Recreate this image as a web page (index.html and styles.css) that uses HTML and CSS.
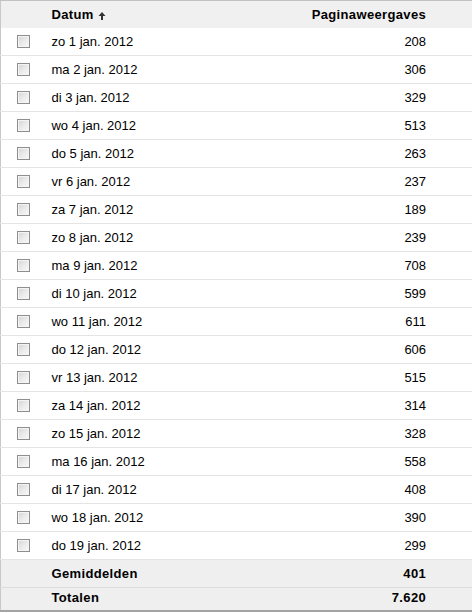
FILE: index.html
```html
<!DOCTYPE html>
<html>
<head>
<meta charset="utf-8">
<link rel="stylesheet" href="styles.css">
</head>
<body>
<table class="grid">
  <colgroup>
    <col class="c-check"><col class="c-date"><col class="c-num"><col class="c-pad">
  </colgroup>
  <thead>
    <tr class="head">
      <th></th>
      <th class="t-left">Datum<svg class="arrow" width="8" height="9" viewBox="0 0 8 9"><path d="M4 1 L7.5 5 H5 V9 H3 V5 H0.5 Z" fill="#333"/></svg></th>
      <th class="t-right">Paginaweergaves</th>
      <th></th>
    </tr>
  </thead>
  <tbody>
    <tr><td><span class="cb"></span></td><td>zo 1 jan. 2012</td><td class="t-right">208</td><td></td></tr>
    <tr><td><span class="cb"></span></td><td>ma 2 jan. 2012</td><td class="t-right">306</td><td></td></tr>
    <tr><td><span class="cb"></span></td><td>di 3 jan. 2012</td><td class="t-right">329</td><td></td></tr>
    <tr><td><span class="cb"></span></td><td>wo 4 jan. 2012</td><td class="t-right">513</td><td></td></tr>
    <tr><td><span class="cb"></span></td><td>do 5 jan. 2012</td><td class="t-right">263</td><td></td></tr>
    <tr><td><span class="cb"></span></td><td>vr 6 jan. 2012</td><td class="t-right">237</td><td></td></tr>
    <tr><td><span class="cb"></span></td><td>za 7 jan. 2012</td><td class="t-right">189</td><td></td></tr>
    <tr><td><span class="cb"></span></td><td>zo 8 jan. 2012</td><td class="t-right">239</td><td></td></tr>
    <tr><td><span class="cb"></span></td><td>ma 9 jan. 2012</td><td class="t-right">708</td><td></td></tr>
    <tr><td><span class="cb"></span></td><td>di 10 jan. 2012</td><td class="t-right">599</td><td></td></tr>
    <tr><td><span class="cb"></span></td><td>wo 11 jan. 2012</td><td class="t-right">611</td><td></td></tr>
    <tr><td><span class="cb"></span></td><td>do 12 jan. 2012</td><td class="t-right">606</td><td></td></tr>
    <tr><td><span class="cb"></span></td><td>vr 13 jan. 2012</td><td class="t-right">515</td><td></td></tr>
    <tr><td><span class="cb"></span></td><td>za 14 jan. 2012</td><td class="t-right">314</td><td></td></tr>
    <tr><td><span class="cb"></span></td><td>zo 15 jan. 2012</td><td class="t-right">328</td><td></td></tr>
    <tr><td><span class="cb"></span></td><td>ma 16 jan. 2012</td><td class="t-right">558</td><td></td></tr>
    <tr><td><span class="cb"></span></td><td>di 17 jan. 2012</td><td class="t-right">408</td><td></td></tr>
    <tr><td><span class="cb"></span></td><td>wo 18 jan. 2012</td><td class="t-right">390</td><td></td></tr>
    <tr><td><span class="cb"></span></td><td>do 19 jan. 2012</td><td class="t-right">299</td><td></td></tr>
  </tbody>
  <tfoot>
    <tr class="sum avg"><td></td><td>Gemiddelden</td><td class="t-right">401</td><td></td></tr>
    <tr class="sum total"><td></td><td>Totalen</td><td class="t-right">7.620</td><td></td></tr>
  </tfoot>
</table>
</body>
</html>
```
FILE: styles.css
```css
html, body {
  margin: 0;
  padding: 0;
  background: #ffffff;
}
.grid {
  width: 472px;
  border-collapse: collapse;
  font-family: "Liberation Sans", Arial, sans-serif;
  font-size: 13px;
  color: #000;
  border-left: 1px solid #c8c8c8;
}
.c-check { width: 43px; }
.c-date { width: 200px; }
.c-num { width: 183px; }
.c-pad { width: 46px; }
.grid th, .grid td {
  padding: 0;
  vertical-align: middle;
}
.grid th:nth-child(2), .grid td:nth-child(2) { padding-left: 8px; }
.head th {
  height: 27px;
  background: #f0f0f0;
  border-top: 1px solid #c2c2c2;
  font-weight: bold;
  letter-spacing: 0.35px;
  color: #000;
}
.t-left { text-align: left; }
.t-right { text-align: right; }
.arrow {
  margin-left: 4px;
  vertical-align: -1px;
}
tbody td {
  height: 27px;
  border-bottom: 1px solid #e4e4e4;
}
.cb {
  display: block;
  width: 11px;
  height: 11px;
  margin-left: 16px;
  border: 1px solid #8e8e8e;
  background: linear-gradient(135deg, #d4d4d4 0%, #ececec 55%, #f8f8f8 100%);
  box-shadow: inset 0 0 0 1px #f4f4f4;
}
.sum td {
  background: #efefef;
  font-weight: bold;
  letter-spacing: 0.35px;
  color: #000;
}
.avg td {
  height: 27px;
  border-bottom: 1px solid #dcdcdc;
}
.total td {
  height: 19px;
  padding-bottom: 3px;
  border-bottom: 2px solid #a3a3a3;
}
```
